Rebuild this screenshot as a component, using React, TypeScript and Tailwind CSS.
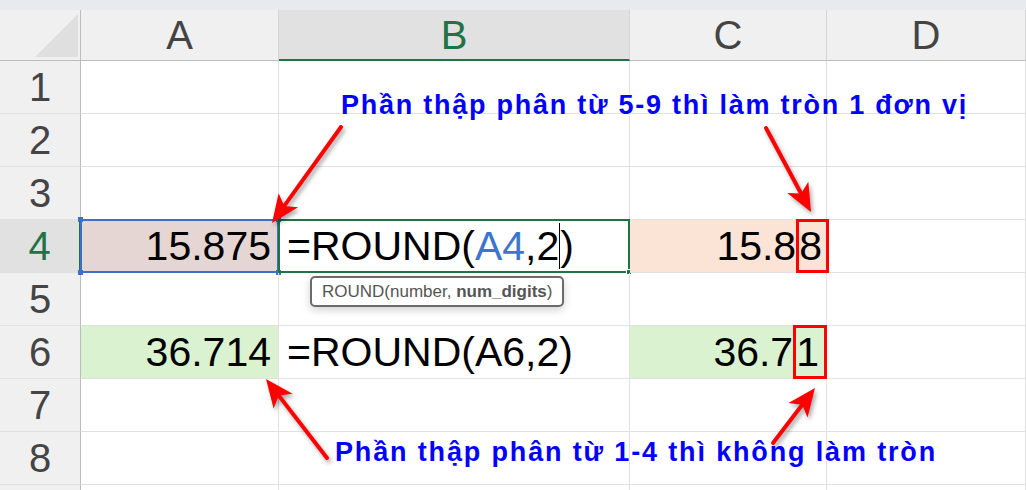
import type { ReactNode } from 'react';

const COLS = ['A', 'B', 'C', 'D'];
const ROWS = [1, 2, 3, 4, 5, 6, 7, 8, 9];

// callout arrows: [startX, startY, tipX, tipY]
const arrows: [number, number, number, number][] = [
  [341, 127, 272, 223],
  [766, 128, 811, 212],
  [327, 458, 266, 379],
  [773, 443, 815, 388],
];

function Arrow({ a }: { a: [number, number, number, number] }) {
  const [x1, y1, x2, y2] = a;
  const len = Math.hypot(x2 - x1, y2 - y1);
  const ux = (x2 - x1) / len;
  const uy = (y2 - y1) / len;
  const head = 28;
  const half = 12;
  const bx = x2 - ux * head;
  const by = y2 - uy * head;
  const pts = [
    `${x2},${y2}`,
    `${bx - uy * half},${by + ux * half}`,
    `${bx + ux * 7},${by + uy * 7}`,
    `${bx + uy * half},${by - ux * half}`,
  ].join(' ');
  return (
    <g>
      <line x1={x1} y1={y1} x2={bx + ux * 7} y2={by + uy * 7} stroke="#ff0000" strokeWidth={4} strokeLinecap="round" />
      <polygon points={pts} fill="#ff0000" />
    </g>
  );
}

function Cell({ children, className = '' }: { children?: ReactNode; className?: string }) {
  return <div className={`relative border-r border-b border-[#e1e1e1] ${className}`}>{children}</div>;
}

export default function App() {
  return (
    <div className="relative w-full h-[490px] overflow-hidden bg-white font-['Liberation_Sans',Arial,sans-serif]">
      <div className="h-[10px] bg-[#e9eaee]" />
      <div className="grid grid-cols-[81px_198px_351px_197px_1fr] grid-rows-[51px_repeat(9,53px)]">
        {/* corner */}
        <div className="relative bg-[#f0f0f0] border-r border-b border-[#bdbdbd]">
          <svg className="absolute left-0 top-0" width="81" height="51">
            <polygon points="35,47 78,47 78,4" fill="#dfdfdf" />
          </svg>
        </div>
        {COLS.map((c) =>
          c === 'B' ? (
            <div key={c} className="flex items-center justify-center bg-[#e1e1e1] border-r border-[#d4d4d4] border-b-2 border-b-[#217346] text-[40px] leading-none text-[#217346]">
              {c}
            </div>
          ) : (
            <div key={c} className="flex items-center justify-center bg-[#f0f0f0] border-r border-[#d4d4d4] border-b border-b-[#bdbdbd] text-[40px] leading-none text-[#444]">
              {c}
            </div>
          )
        )}

        {ROWS.map((r) => (
          <Row key={r} r={r} />
        ))}
      </div>

      {/* callout text */}
      <div className="absolute left-[341px] top-[92px] text-[27px] leading-none font-bold tracking-[1.75px] text-[#0000ff] whitespace-nowrap [text-shadow:0_0_2px_#fff,0_0_2px_#fff]">
        Phần thập phân từ 5-9 thì làm tròn 1 đơn vị
      </div>
      <div className="absolute left-[335px] top-[439px] text-[27px] leading-none font-bold tracking-[1.85px] text-[#0000ff] whitespace-nowrap [text-shadow:0_0_2px_#fff,0_0_2px_#fff]">
        Phần thập phân từ 1-4 thì không làm tròn
      </div>

      <svg className="absolute inset-0 pointer-events-none [filter:drop-shadow(2px_3px_2px_rgba(0,0,0,0.35))]" width="1026" height="490">
        {arrows.map((a, i) => (
          <Arrow key={i} a={a} />
        ))}
      </svg>
    </div>
  );
}

function Row({ r }: { r: number }) {
  const active = r === 4;
  const big = 'text-[41px] leading-none text-black';
  return (
    <>
      <div
        className={`flex items-center justify-center text-[40px] leading-none border-b border-[#e0e0e0] ${
          active
            ? 'bg-[#e1e1e1] text-[#217346] border-r-2 border-r-[#217346]'
            : 'bg-[#f0f0f0] text-[#444] border-r border-r-[#bdbdbd]'
        }`}
      >
        {r < 9 ? r : ''}
      </div>

      {/* A */}
      {r === 4 ? (
        <Cell className={`flex items-center justify-end pr-[7px] bg-[#e6d6d3] ${big}`}>
          15.875
          <div className="absolute -inset-px border-2 border-[#3b6fc9]" />
          <div className="absolute -left-[3px] -top-[3px] w-[5px] h-[5px] bg-[#3b6fc9]" />
          <div className="absolute -right-[3px] -top-[3px] w-[5px] h-[5px] bg-[#3b6fc9]" />
          <div className="absolute -left-[3px] -bottom-[3px] w-[5px] h-[5px] bg-[#3b6fc9]" />
          <div className="absolute -right-[3px] -bottom-[3px] w-[5px] h-[5px] bg-[#3b6fc9]" />
        </Cell>
      ) : r === 6 ? (
        <Cell className={`flex items-center justify-end pr-[7px] bg-[#daf2d0] ${big}`}>36.714</Cell>
      ) : (
        <Cell />
      )}

      {/* B */}
      {r === 4 ? (
        <Cell className={`flex items-center pl-[8px] ${big}`}>
          =ROUND(<span className="text-[#3a76d0]">A4</span>,2
          <span className="inline-block w-px h-[46px] bg-black" />)
          <div className="absolute -inset-px border-2 border-[#217346]" />
          <div className="absolute -right-[3px] -bottom-[3px] w-[6px] h-[6px] bg-[#217346] border border-white" />
          <div className="absolute z-10 left-[31px] top-[56px] px-[10px] py-[4px] rounded-[5px] border-2 border-[#6b6b6b] bg-white shadow-[0_3px_8px_rgba(0,0,0,0.18)] text-[17px] leading-[19px] text-[#555] whitespace-nowrap">
            ROUND(number, <span className="font-bold">num_digits</span>)
          </div>
        </Cell>
      ) : r === 6 ? (
        <Cell className={`flex items-center pl-[8px] ${big}`}>=ROUND(A6,2)</Cell>
      ) : (
        <Cell />
      )}

      {/* C */}
      {r === 4 ? (
        <Cell className={`flex items-stretch justify-end bg-[#fbe3d6] ${big}`}>
          <span className="self-center">15.8</span>
          <span className="relative z-10 -mr-[3px] -my-px flex items-center pl-0 pr-[4px] border-[3px] border-[#ff0000]">8</span>
        </Cell>
      ) : r === 6 ? (
        <Cell className={`flex items-stretch justify-end bg-[#daf2d0] ${big}`}>
          <span className="self-center">36.7</span>
          <span className="relative z-10 -mr-px -my-px flex items-center pl-0 pr-[5px] border-[3px] border-[#ff0000]">1</span>
        </Cell>
      ) : (
        <Cell />
      )}

      {/* D */}
      <Cell />
    </>
  );
}
